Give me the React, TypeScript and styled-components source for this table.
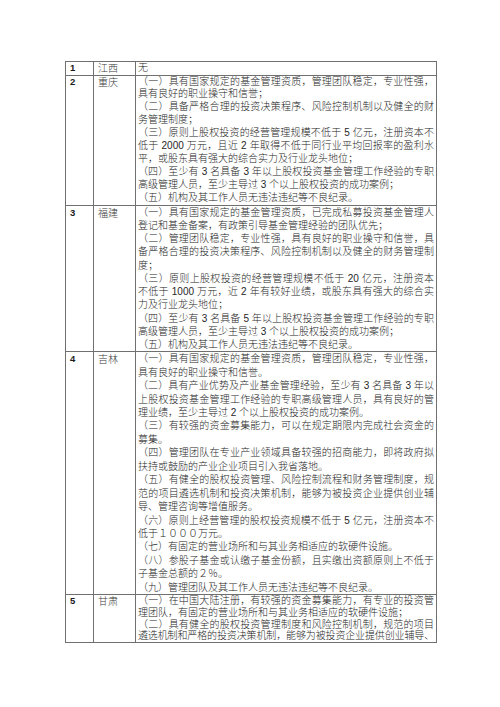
import styled, { createGlobalStyle } from 'styled-components'

type Line = { text: string; full?: boolean; tight?: boolean }
type Entry = { no: string; name: string; lh: number; lines: Line[] }

const f = (text: string): Line => ({ text, full: true })
const e = (text: string): Line => ({ text })

const rows: Entry[] = [
  { no: '1', name: '江西', lh: 12.6, lines: [e('无')] },
  {
    no: '2',
    name: '重庆',
    lh: 12.9,
    lines: [
      f('（一）具有国家规定的基金管理资质，管理团队稳定，专业性强，'),
      e('具有良好的职业操守和信誉；'),
      f('（二）具备严格合理的投资决策程序、风险控制机制以及健全的财'),
      e('务管理制度；'),
      f('（三）原则上股权投资的经营管理规模不低于 5 亿元，注册资本不'),
      f('低于 2000 万元，且近 2 年取得不低于同行业平均回报率的盈利水'),
      e('平，或股东具有强大的综合实力及行业龙头地位；'),
      f('（四）至少有 3 名具备 3 年以上股权投资基金管理工作经验的专职'),
      e('高级管理人员，至少主导过 3 个以上股权投资的成功案例；'),
      e('（五）机构及其工作人员无违法违纪等不良纪录。'),
    ],
  },
  {
    no: '3',
    name: '福建',
    lh: 13.25,
    lines: [
      f('（一）具有国家规定的基金管理资质，已完成私募投资基金管理人'),
      e('登记和基金备案，有政策引导基金管理经验的团队优先；'),
      f('（二）管理团队稳定，专业性强，具有良好的职业操守和信誉，具'),
      f('备严格合理的投资决策程序、风险控制机制以及健全的财务管理制'),
      e('度；'),
      f('（三）原则上股权投资的经营管理规模不低于 20 亿元，注册资本'),
      f('不低于 1000 万元，近 2 年有较好业绩，或股东具有强大的综合实'),
      e('力及行业龙头地位；'),
      f('（四）至少有 3 名具备 5 年以上股权投资基金管理工作经验的专职'),
      e('高级管理人员，至少主导过 3 个以上股权投资的成功案例；'),
      e('（五）机构及其工作人员无违法违纪等不良纪录。'),
    ],
  },
  {
    no: '4',
    name: '吉林',
    lh: 13.45,
    lines: [
      f('（一）具有国家规定的基金管理资质，管理团队稳定，专业性强，'),
      e('具有良好的职业操守和信誉。'),
      f('（二）具有产业优势及产业基金管理经验，至少有 3 名具备 3 年以'),
      f('上股权投资基金管理工作经验的专职高级管理人员，具有良好的管'),
      e('理业绩，至少主导过 2 个以上股权投资的成功案例。'),
      f('（三）有较强的资金募集能力，可以在规定期限内完成社会资金的'),
      e('募集。'),
      f('（四）管理团队在专业产业领域具备较强的招商能力，即将政府拟'),
      e('扶持或鼓励的产业企业项目引入我省落地。'),
      f('（五）有健全的股权投资管理、风险控制流程和财务管理制度，规'),
      f('范的项目遴选机制和投资决策机制，能够为被投资企业提供创业辅'),
      e('导、管理咨询等增值服务。'),
      f('（六）原则上经营管理的股权投资规模不低于 5 亿元，注册资本不'),
      e('低于１０００万元。'),
      e('（七）有固定的营业场所和与其业务相适应的软硬件设施。'),
      f('（八）参股子基金或认缴子基金份额，且实缴出资额原则上不低于'),
      e('子基金总额的２％。'),
      e('（九）管理团队及其工作人员无违法违纪等不良纪录。'),
    ],
  },
  {
    no: '5',
    name: '甘肃',
    lh: 11.7,
    lines: [
      f('（一）在中国大陆注册，有较强的资金募集能力，有专业的投资管'),
      e('理团队，有固定的营业场所和与其业务相适应的软硬件设施；'),
      f('（二）具有健全的股权投资管理制度和风险控制机制，规范的项目'),
      { text: '遴选机制和严格的投资决策机制，能够为被投资企业提供创业辅导、', full: true, tight: true },
    ],
  },
]

const GlobalStyle = createGlobalStyle`
  html, body {
    margin: 0;
    background: #ffffff;
  }
  body {
    font-family: "Liberation Serif", "Noto Serif CJK SC", "Noto Sans CJK SC", serif;
    color: #222;
  }
`

const Page = styled.div`
  width: 500px;
  height: 707px;
  padding: 61px 0 0 65px;
  box-sizing: border-box;
  overflow: hidden;
`

const Table = styled.table`
  border-collapse: collapse;
  table-layout: fixed;
  width: 366px;
`

const Cell = styled.td`
  border: 1px solid #707070;
  vertical-align: top;
  padding: 0 2px;
  font-size: 10px;
  white-space: nowrap;
  overflow: hidden;
`

const NoCell = styled(Cell)`
  width: 21px;
  padding-left: 4px;
  font-family: "Liberation Sans", "Noto Sans CJK SC", sans-serif;
  font-weight: 700;
  font-size: 9.5px;
  color: #1a1a1a;
`

const NameCell = styled(Cell)`
  width: 35px;
  padding-left: 4px;
  font-family: "Noto Sans CJK SC", sans-serif;
  font-weight: 300;
  color: #3a3a3a;
`

const ContentCell = styled(Cell)`
  width: 296px;
  font-family: "Liberation Sans", "Noto Sans CJK SC", sans-serif;
  font-weight: 300;
  color: #262626;
`

const TextLine = styled.div<{ $full?: boolean; $tight?: boolean; $lh: number }>`
  line-height: ${(p) => p.$lh}px;
  height: ${(p) => p.$lh}px;
  text-align: ${(p) => (p.$full ? 'justify' : 'left')};
  text-align-last: ${(p) => (p.$full ? 'justify' : 'auto')};
  letter-spacing: ${(p) => (p.$tight ? '-0.2px' : '0')};
`

const Label = styled.div<{ $lh: number }>`
  line-height: ${(p) => p.$lh}px;
`

export default function App() {
  return (
    <>
      <GlobalStyle />
      <Page>
        <Table>
          <tbody>
            {rows.map((row) => (
              <tr key={row.no}>
                <NoCell>
                  <Label $lh={row.lh}>{row.no}</Label>
                </NoCell>
                <NameCell>
                  <Label $lh={row.lh}>{row.name}</Label>
                </NameCell>
                <ContentCell>
                  {row.lines.map((line, idx) => (
                    <TextLine key={idx} $full={line.full} $tight={line.tight} $lh={row.lh}>
                      {line.text}
                    </TextLine>
                  ))}
                </ContentCell>
              </tr>
            ))}
          </tbody>
        </Table>
      </Page>
    </>
  )
}
